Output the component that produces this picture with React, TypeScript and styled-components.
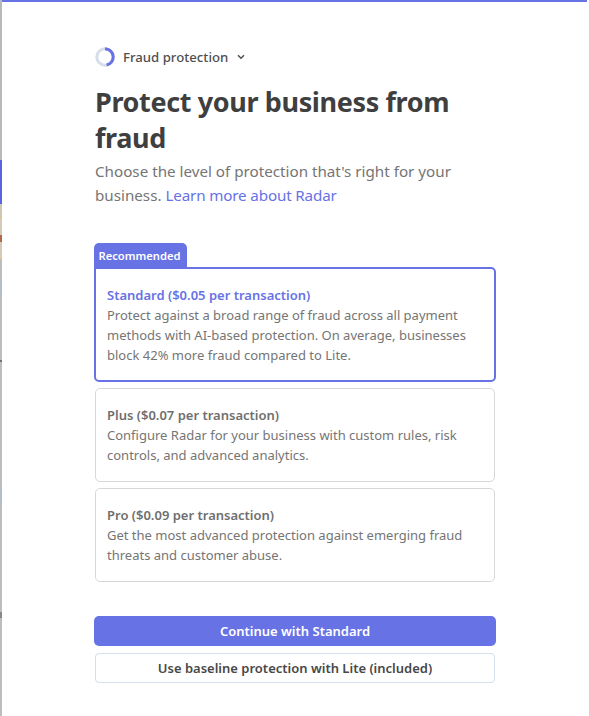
import { createGlobalStyle, styled } from 'styled-components'

const GlobalStyle = createGlobalStyle`
  html, body {
    margin: 0;
    padding: 0;
    background: #fff;
  }
  body {
    font-family: "Noto Sans", "Open Sans", sans-serif;
  }
`

const Page = styled.div`
  width: 589px;
  height: 716px;
  display: flex;
  overflow: hidden;
`

const LeftEdge = styled.div`
  width: 2px;
  flex: none;
  display: flex;
  flex-direction: column;
  background: #b9b9b9;
`

const EdgePiece = styled.div<{ $h: number; $c: string }>`
  height: ${p => p.$h}px;
  background: ${p => p.$c};
`

const Sheet = styled.div`
  flex: 1;
  display: flex;
  flex-direction: column;
  background: #fff;
`

const TopBar = styled.div`
  height: 2px;
  flex: none;
  margin-right: 2px;
  background: #6772e5;
`

const Content = styled.div`
  width: 400px;
  margin-left: 93px;
  padding-top: 44px;
  display: flex;
  flex-direction: column;
`

const Crumb = styled.div`
  height: 22px;
  display: flex;
  align-items: center;
  gap: 8px;
  font-size: 13.2px;
  font-weight: 500;
  color: #4f4f4f;
  svg:last-child {
    margin-left: 1px;
  }
`

const Title = styled.h1`
  margin: 16px 0 0;
  font-size: 27px;
  line-height: 36px;
  letter-spacing: -0.37px;
  font-weight: 700;
  color: #3f3f3f;
`

const Lead = styled.p`
  margin: 3px 0 0;
  font-size: 15.2px;
  line-height: 24px;
  color: #757575;
  a {
    color: #6772e5;
    letter-spacing: -0.15px;
    text-decoration: none;
  }
`

const Plans = styled.div`
  margin-top: 36px;
  display: flex;
  flex-direction: column;
  gap: 6px;
`

const Featured = styled.div`
  margin: 0 -1px;
  display: flex;
  flex-direction: column;
  align-items: flex-start;
`

const Tab = styled.div`
  box-sizing: border-box;
  height: 25px;
  width: 93px;
  padding-right: 2px;
  display: flex;
  align-items: center;
  justify-content: center;
  border-radius: 5px 5px 0 0;
  background: #6772e5;
  color: #fff;
  font-size: 11.2px;
  font-weight: 600;
`

const Plan = styled.div<{ $active?: boolean }>`
  box-sizing: border-box;
  width: 100%;
  margin-top: ${p => (p.$active ? '-1px' : '0')};
  padding: ${p => (p.$active ? '16px 11px 15px' : '16px 11px 16px')};
  border: ${p => (p.$active ? '2px solid #6772e5' : '1px solid #d8d8d8')};
  border-radius: ${p => (p.$active ? '0 5px 5px 5px' : '5px')};
  background: ${p => (p.$active ? 'transparent' : '#fff')};
  font-size: 13px;
  line-height: 20px;
  color: #757575;
`

const PlanName = styled.div<{ $active?: boolean }>`
  font-weight: 600;
  color: ${p => (p.$active ? '#6772e5' : '#6f6f6f')};
`

const Actions = styled.div`
  margin-top: 34px;
  display: flex;
  flex-direction: column;
  gap: 7px;
`

const PrimaryButton = styled.button`
  margin: 0 -1px;
  height: 30px;
  padding: 0;
  border: 0;
  border-radius: 5px;
  background: #6772e5;
  color: #fff;
  font-family: inherit;
  font-size: 13px;
  font-weight: 600;
`

const SecondaryButton = styled.button`
  height: 30px;
  padding: 0;
  border: 1px solid #d5deea;
  border-radius: 4px;
  background: #fff;
  color: #484848;
  font-family: inherit;
  font-size: 13px;
  font-weight: 600;
`

function Progress() {
  return (
    <svg width="20" height="20" viewBox="0 0 20 20" fill="none">
      <circle cx="10" cy="10" r="8.2" stroke="#d5deea" strokeWidth="3" />
      <path d="M10 1.8a8.2 8.2 0 0 1 1.6 16.24" stroke="#6772e5" strokeWidth="3" />
    </svg>
  )
}

function Chevron() {
  return (
    <svg width="8" height="6" viewBox="0 0 8 6" fill="none">
      <path d="M1 1.3l3 3 3-3" stroke="#4f4f4f" strokeWidth="1.5" />
    </svg>
  )
}

const edge = [
  { h: 160, c: '#b9b9b9' },
  { h: 44, c: '#5b63e0' },
  { h: 13, c: '#cfc7b4' },
  { h: 1, c: '#e6c860' },
  { h: 17, c: '#d3cbb8' },
  { h: 7, c: '#b0694a' },
  { h: 16, c: '#d3cbb8' },
  { h: 1, c: '#e6c860' },
  { h: 21, c: '#bdbdbd' },
  { h: 16, c: '#b4bfc4' },
  { h: 64, c: '#bdbdbd' },
  { h: 2, c: '#6e7378' },
  { h: 127, c: '#bdbdbd' },
  { h: 17, c: '#b4bfc4' },
  { h: 107, c: '#bdbdbd' },
  { h: 6, c: '#85888c' },
  { h: 98, c: '#bdbdbd' },
]

export default function App() {
  return (
    <Page>
      <GlobalStyle />
      <LeftEdge>
        {edge.map((e, i) => (
          <EdgePiece key={i} $h={e.h} $c={e.c} />
        ))}
      </LeftEdge>
      <Sheet>
        <TopBar />
        <Content>
          <Crumb>
            <Progress />
            Fraud protection
            <Chevron />
          </Crumb>
          <Title>Protect your business from fraud</Title>
          <Lead>
            Choose the level of protection that's right for your business. <a href="#">Learn more about Radar</a>
          </Lead>
          <Plans>
            <Featured>
              <Tab>Recommended</Tab>
              <Plan $active>
                <PlanName $active>Standard ($0.05 per transaction)</PlanName>
                Protect against a broad range of fraud across all payment methods with AI-based protection. On average, businesses block 42% more fraud compared to Lite.
              </Plan>
            </Featured>
            <Plan>
              <PlanName>Plus ($0.07 per transaction)</PlanName>
              Configure Radar for your business with custom rules, risk controls, and advanced analytics.
            </Plan>
            <Plan>
              <PlanName>Pro ($0.09 per transaction)</PlanName>
              Get the most advanced protection against emerging fraud threats and customer abuse.
            </Plan>
          </Plans>
          <Actions>
            <PrimaryButton>Continue with Standard</PrimaryButton>
            <SecondaryButton>Use baseline protection with Lite (included)</SecondaryButton>
          </Actions>
        </Content>
      </Sheet>
    </Page>
  )
}
